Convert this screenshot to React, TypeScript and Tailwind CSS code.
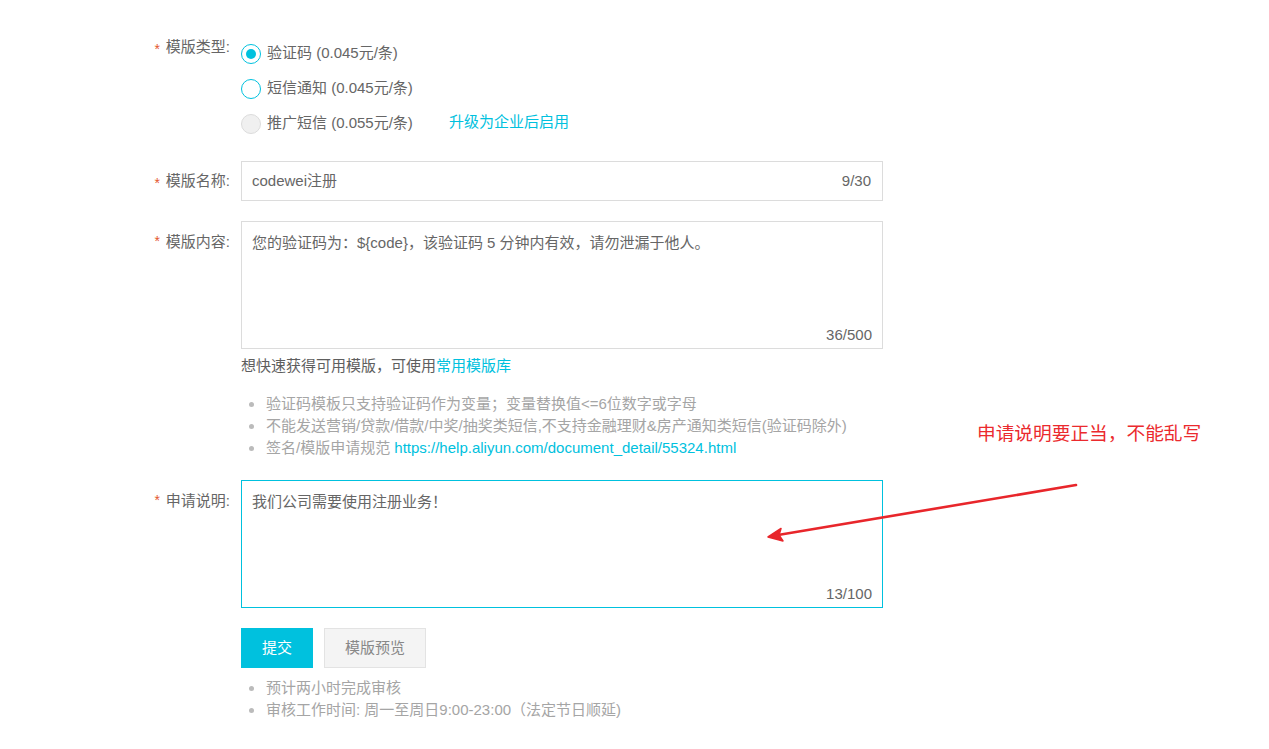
import React from "react";

const font = { fontFamily: '"Liberation Sans", "Noto Sans CJK SC", sans-serif' };

function Label({ text, className = "" }: { text: string; className?: string }) {
  return (
    <div className={`w-[230px] shrink-0 flex justify-end items-center text-[15px] text-[#666] ${className}`}>
      <span className="text-[#e4572e] mr-[6px] text-[14px] leading-none mt-[3px]">*</span>
      <span>{text}</span>
    </div>
  );
}

function Radio({ state }: { state: "on" | "off" | "disabled" }) {
  if (state === "disabled")
    return <span className="w-[20px] h-[20px] rounded-full border border-[#dcdcdc] bg-[#f0f0f0] inline-block shrink-0" />;
  return (
    <span className="w-[20px] h-[20px] rounded-full border-[1.5px] border-[#00c1de] bg-white inline-flex items-center justify-center shrink-0">
      {state === "on" && <span className="w-[10px] h-[10px] rounded-full bg-[#00c1de]" />}
    </span>
  );
}

function Bullet({ children }: { children: React.ReactNode }) {
  return (
    <li className="flex items-center h-[22px]">
      <span className="w-[5px] h-[5px] rounded-full bg-[#bbb] ml-[8px] mr-[12px] shrink-0" />
      <span className="whitespace-nowrap">{children}</span>
    </li>
  );
}

export default function App() {
  return (
    <div className="relative w-[1269px] h-[749px] bg-white overflow-hidden" style={font}>
      <div className="pt-[36px] flex flex-col">
        {/* template type */}
        <div className="flex">
          <Label text="模版类型:" className="h-[35px] items-center -mt-[6px]" />
          <div className="ml-[11px] flex flex-col text-[15px] text-[#666]">
            <div className="h-[35px] flex items-center gap-[6px]">
              <Radio state="on" />
              <span>验证码 (0.045元/条)</span>
            </div>
            <div className="h-[35px] flex items-center gap-[6px]">
              <Radio state="off" />
              <span>短信通知 (0.045元/条)</span>
            </div>
            <div className="h-[35px] flex items-center gap-[6px]">
              <Radio state="disabled" />
              <span>推广短信 (0.055元/条)</span>
              <span className="ml-[30px] text-[#00c1de] -mt-[3px]">升级为企业后启用</span>
            </div>
          </div>
        </div>

        {/* template name */}
        <div className="flex mt-[20px]">
          <Label text="模版名称:" className="h-[40px]" />
          <div className="ml-[11px] w-[642px] h-[40px] border border-[#dcdcdc] flex items-center justify-between pl-[10px] pr-[11px] text-[15px] text-[#666]">
            <span>codewei注册</span>
            <span>9/30</span>
          </div>
        </div>

        {/* template content */}
        <div className="flex mt-[20px]">
          <Label text="模版内容:" className="h-[40px] items-start pt-[10px]" />
          <div className="ml-[11px] w-[642px]">
            <div className="h-[128px] border border-[#dcdcdc] flex flex-col justify-between pl-[10px] pr-[10px] pt-[11px] pb-[3px] text-[15px] text-[#666]">
              <span className="leading-[20px]">您的验证码为：${"{code}"}，该验证码 5 分钟内有效，请勿泄漏于他人。</span>
              <span className="self-end leading-[20px]">36/500</span>
            </div>
            <div className="mt-[7px] h-[20px] leading-[20px] text-[15px] text-[#5e5e5e]">
              想快速获得可用模版，可使用<span className="text-[#00c1de]">常用模版库</span>
            </div>
            <ul className="mt-[17px] text-[15px] text-[#a5a5a5]">
              <Bullet>验证码模板只支持验证码作为变量；变量替换值&lt;=6位数字或字母</Bullet>
              <Bullet>不能发送营销/贷款/借款/中奖/抽奖类短信,不支持金融理财&amp;房产通知类短信(验证码除外)</Bullet>
              <Bullet>
                签名/模版申请规范 <span className="text-[#00c1de]">https://help.aliyun.com/document_detail/55324.html</span>
              </Bullet>
            </ul>
          </div>
        </div>

        {/* description */}
        <div className="flex mt-[21px]">
          <Label text="申请说明:" className="h-[40px] items-start pt-[10px]" />
          <div className="ml-[11px] w-[642px]">
            <div className="h-[128px] border border-[#00c1de] flex flex-col justify-between pl-[10px] pr-[10px] pt-[11px] pb-[3px] text-[15px] text-[#666]">
              <span className="leading-[20px]">我们公司需要使用注册业务！</span>
              <span className="self-end leading-[20px]">13/100</span>
            </div>
            <div className="mt-[20px] flex gap-[11px]">
              <button className="w-[72px] h-[40px] bg-[#00c1de] text-white text-[15px]">提交</button>
              <button className="w-[102px] h-[40px] bg-[#f4f4f4] border border-[#e3e3e3] text-[#888] text-[15px]">模版预览</button>
            </div>
            <ul className="mt-[9px] text-[15px] text-[#a5a5a5]">
              <Bullet>预计两小时完成审核</Bullet>
              <Bullet>审核工作时间: 周一至周日9:00-23:00（法定节日顺延)</Bullet>
            </ul>
          </div>
        </div>
      </div>

      {/* annotation */}
      <div className="absolute left-[977px] top-[422px] text-[18.7px] leading-[24px] text-[#eb2a2e] whitespace-nowrap">
        申请说明要正当，不能乱写
      </div>
      <svg className="absolute left-0 top-0 pointer-events-none" width="1269" height="749">
        <line x1="1076" y1="485" x2="778" y2="535" stroke="#e8262b" strokeWidth="2.6" strokeLinecap="round" />
        <path d="M768 537 L781 528.5 L779 535 L783 541 Z" fill="#e8262b" stroke="#e8262b" strokeWidth="1.5" strokeLinejoin="round" />
      </svg>
    </div>
  );
}
